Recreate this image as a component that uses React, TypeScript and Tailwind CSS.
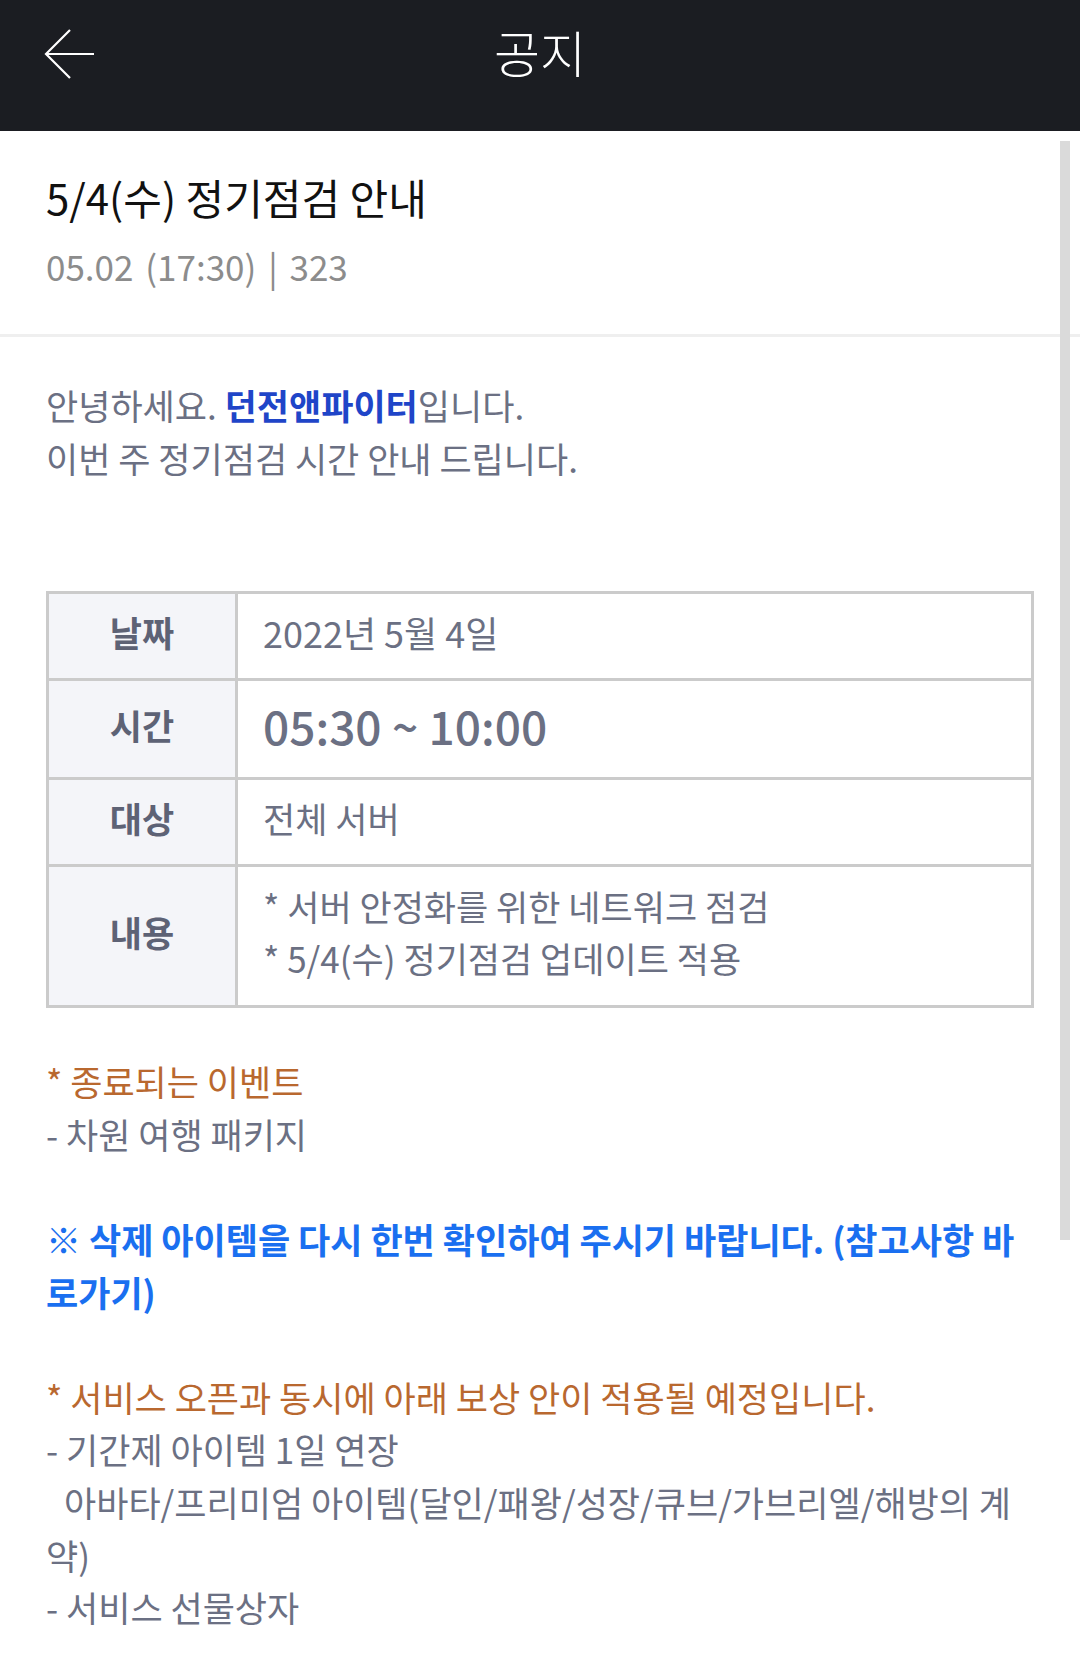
import React from "react";

const font = { fontFamily: '"Noto Sans CJK KR", "Noto Sans", sans-serif' };

function BackArrow() {
  return (
    <svg width="52" height="50" viewBox="0 0 52 50" fill="none" stroke="white" strokeWidth="2.2">
      <path d="M50 25H2" />
      <path d="M26 1L2 25L26 49" />
    </svg>
  );
}

const rows = [
  { label: "날짜", h: "h-[84px]", value: <span className="text-[36px] text-[#6b7083]">2022년 5월 4일</span> },
  { label: "시간", h: "h-[99px]", value: <span className="text-[46px] font-medium text-[#6b7083]">05:30 ~ 10:00</span> },
  { label: "대상", h: "h-[87px]", value: <span className="text-[35px] text-[#6b7083]">전체 서버</span> },
  {
    label: "내용",
    h: "h-[141px]",
    value: (
      <div className="text-[35px] leading-[52px] text-[#6b7083]">
        <div>* 서버 안정화를 위한 네트워크 점검</div>
        <div>* 5/4(수) 정기점검 업데이트 적용</div>
      </div>
    ),
  },
];

export default function App() {
  return (
    <div className="w-[1080px] min-h-[1673px] bg-white relative" style={font}>
      <header className="h-[131px] pb-[26px] bg-[#1b1d22] grid grid-cols-[1fr_auto_1fr] items-center">
        <div className="pl-[44px] pt-[2px] flex items-center">
          <BackArrow />
        </div>
        <h1 className="text-[50px] font-light text-white leading-none pb-[4px]">공지</h1>
        <div />
      </header>

      <section className="px-[46px] pt-[38px] pb-[46px] border-b-[3px] border-[#efefef]">
        <h2 className="text-[42px] leading-[56px] text-[#111]">5/4(수) 정기점검 안내</h2>
        <p className="mt-[19px] text-[35px] leading-[44px] text-[#8c8c8c] [word-spacing:4px]">05.02 (17:30) | 323</p>
      </section>

      <main className="px-[46px] pt-[42px] text-[35px] leading-[52.6px] text-[#6b7083]">
        <p>
          안녕하세요. <b className="text-[#1f45c8] font-bold">던전앤파이터</b>입니다.
          <br />
          이번 주 정기점검 시간 안내 드립니다.
        </p>

        <div className="mt-[107px] w-[988px] border-[3px] border-[#cbcbcb]">
          {rows.map((r, i) => (
            <div key={r.label} className={`flex ${r.h} ${i > 0 ? "border-t-[3px] border-[#cbcbcb]" : ""}`}>
              <div className="w-[189px] shrink-0 pb-[8px] bg-[#f4f5f9] border-r-[3px] border-[#cbcbcb] flex items-center justify-center text-[35px] font-bold text-[#5d6275]">
                {r.label}
              </div>
              <div className="flex-1 flex items-center pl-[25px] pb-[8px]">{r.value}</div>
            </div>
          ))}
        </div>

        <div className="mt-[47px]">
          <p className="text-[#b9682f]">* 종료되는 이벤트</p>
          <p>- 차원 여행 패키지</p>
          <p className="mt-[52.6px] text-[#1a6ff0] font-bold">
            ※ 삭제 아이템을 다시 한번 확인하여 주시기 바랍니다. (참고사항 바로가기)
          </p>
          <p className="mt-[52.6px] text-[#b9682f]">* 서비스 오픈과 동시에 아래 보상 안이 적용될 예정입니다.</p>
          <p>- 기간제 아이템 1일 연장</p>
          <p>
            <span className="inline-block w-[18px]" />
            아바타/프리미엄 아이템(달인/패왕/성장/큐브/가브리엘/해방의 계약)
          </p>
          <p>- 서비스 선물상자</p>
        </div>
      </main>

      <div className="absolute left-[1060px] top-[141px] w-[10px] h-[1099px] bg-[#dadada]" />
    </div>
  );
}
